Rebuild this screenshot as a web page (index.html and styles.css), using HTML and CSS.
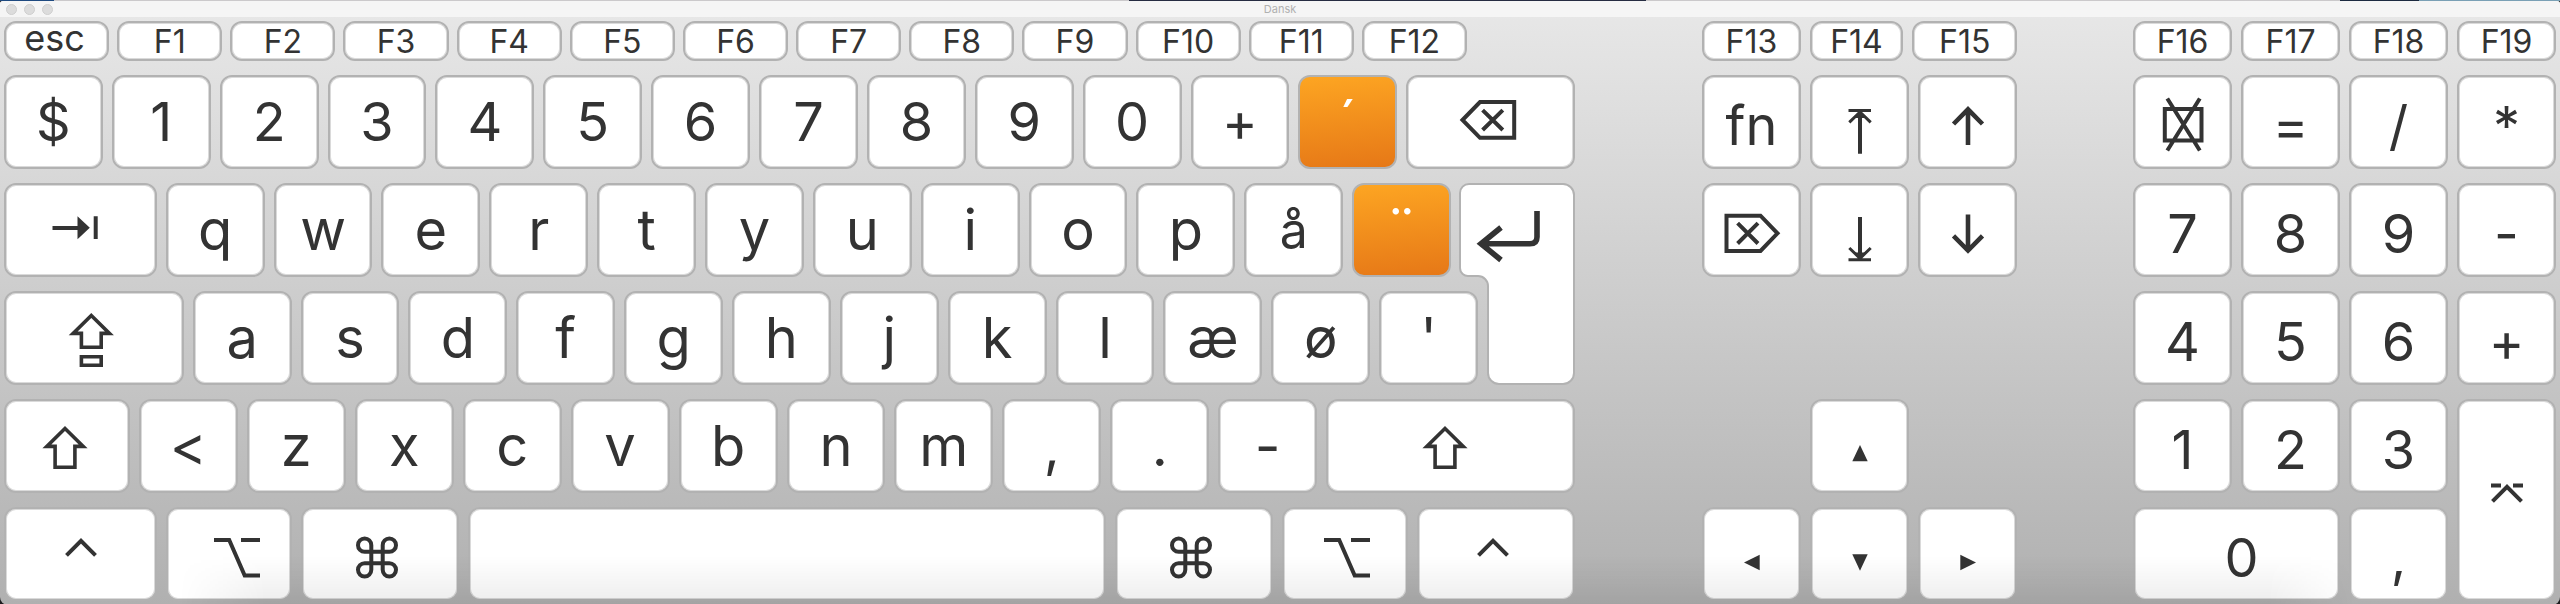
FILE: index.html
```html
<!DOCTYPE html>
<html lang="da">
<head>
<meta charset="utf-8">
<title>Dansk</title>
<link rel="stylesheet" href="styles.css">
</head>
<body>
<svg class="defs" aria-hidden="true">
  <symbol id="shift" viewBox="0 0 64 88"><path class="thin" d="M32 26.5 50.2 44.4H41.9V65.2H22.1V44.4H13.8Z"/></symbol>
  <symbol id="control" viewBox="0 0 64 88"><path d="M17.5 45.3 32 30.8 46.5 45.3"/></symbol>
  <symbol id="option" viewBox="0 0 64 88"><path d="M9 30H24.2L39.7 65.5H55M36 30H55"/></symbol>
  <symbol id="command" viewBox="0 0 64 88"><path transform="translate(32 47.5)" d="M-5.7-12.35V12.35a6.65 6.65 0 1 1-6.65-6.65H12.35a6.65 6.65 0 1 1-6.65 6.65V-12.35a6.65 6.65 0 1 1 6.65 6.65H-12.35a6.65 6.65 0 1 1 6.65-6.65Z"/></symbol>
</svg>
<div class="desktop"></div>
<div class="window">
  <header class="titlebar">
    <div class="lights">
      <button class="light" aria-label="Luk"></button>
      <button class="light" aria-label="Minimer"></button>
      <button class="light" aria-label="Zoom"></button>
    </div>
    <h1 class="title">Dansk</h1>
  </header>
  <main class="keyboard">
    <section class="block main-block" aria-label="Tastatur">
      <div class="row row-function">
        <button class="key fkey esc">esc</button><button class="key fkey">F1</button><button class="key fkey">F2</button><button class="key fkey">F3</button><button class="key fkey">F4</button><button class="key fkey">F5</button><button class="key fkey">F6</button><button class="key fkey">F7</button><button class="key fkey">F8</button><button class="key fkey">F9</button><button class="key fkey">F10</button><button class="key fkey">F11</button><button class="key fkey">F12</button>
      </div>
      <div class="row row-digits">
        <button class="key digit">$</button><button class="key digit">1</button><button class="key digit">2</button><button class="key digit">3</button><button class="key digit">4</button><button class="key digit">5</button><button class="key digit">6</button><button class="key digit">7</button><button class="key digit">8</button><button class="key digit">9</button><button class="key digit">0</button><button class="key digit">+</button><button class="key dead">´</button>
        <button class="key" aria-label="Slet"><svg class="icon" viewBox="0 0 64 88"><path d="M3.5 42 21 24H55.2V59.8H21ZM23.6 32.1 43.8 52M43.8 32.1 23.6 52"/></svg></button>
      </div>
      <div class="home">
        <div class="row row-upper">
          <button class="key" aria-label="Tabulator"><svg class="icon" viewBox="0 0 64 88"><path d="M4.5 42H32M47.7 30.3V53"/><path class="solid" d="M29.5 30.3 41.8 41.8 29.5 53.3Z"/></svg></button>
          <button class="key">q</button><button class="key">w</button><button class="key">e</button><button class="key">r</button><button class="key">t</button><button class="key">y</button><button class="key">u</button><button class="key">i</button><button class="key">o</button><button class="key">p</button><button class="key ring">å</button><button class="key dead">¨</button>
        </div>
        <div class="row row-middle">
          <button class="key" aria-label="Skiftelås"><svg class="icon" viewBox="0 0 64 88"><path class="thin" d="M29.3 21.5 47.5 39.4H39.2V53.2H19.4V39.4H11.1ZM19.4 62.7H39.2V71.2H19.4Z"/></svg></button>
          <button class="key">a</button><button class="key">s</button><button class="key">d</button><button class="key">f</button><button class="key">g</button><button class="key">h</button><button class="key">j</button><button class="key">k</button><button class="key">l</button><button class="key">æ</button><button class="key">ø</button><button class="key">'</button>
        </div>
        <button class="enter" aria-label="Retur">
          <svg class="enter-shape" viewBox="0 0 116 202" preserveAspectRatio="none"><path class="cap" d="M10 1H104A11 11 0 0 1 115 12V190A11 11 0 0 1 104 201H40A11 11 0 0 1 29 190V103A10 10 0 0 0 19 93H10A8 8 0 0 1 1 85V10A9 9 0 0 1 10 1Z"/><path class="thick" d="M78 28V54Q78 60.7 71 60.7H22M42 44.5 22 60.7 42 77"/></svg>
        </button>
      </div>
      <div class="row row-lower">
        <button class="key" aria-label="Venstre skift"><svg class="icon" viewBox="2 0 64 88"><use href="#shift" width="64" height="88"/></svg></button>
        <button class="key">&lt;</button><button class="key">z</button><button class="key">x</button><button class="key">c</button><button class="key">v</button><button class="key">b</button><button class="key">n</button><button class="key">m</button><button class="key">,</button><button class="key">.</button><button class="key">-</button>
        <button class="key" aria-label="Højre skift"><svg class="icon" viewBox="6 0 64 88"><use href="#shift" width="64" height="88"/></svg></button>
      </div>
      <div class="row row-space">
        <button class="key" aria-label="Venstre kontrol"><svg class="icon" viewBox="0 0 64 88"><use href="#control" width="64" height="88"/></svg></button>
        <button class="key" aria-label="Venstre alternativ"><svg class="icon" viewBox="-8 0 64 88"><use href="#option" width="64" height="88"/></svg></button>
        <button class="key" aria-label="Venstre kommando"><svg class="icon" viewBox="3 0 64 88"><use href="#command" width="64" height="88"/></svg></button>
        <button class="key" aria-label="Mellemrum"></button>
        <button class="key" aria-label="Højre kommando"><svg class="icon" viewBox="3 0 64 88"><use href="#command" width="64" height="88"/></svg></button>
        <button class="key" aria-label="Højre alternativ"><svg class="icon" viewBox="-2 0 64 88"><use href="#option" width="64" height="88"/></svg></button>
        <button class="key" aria-label="Højre kontrol"><svg class="icon" viewBox="3 0 64 88"><use href="#control" width="64" height="88"/></svg></button>
      </div>
    </section>

    <section class="block nav-block" aria-label="Navigation">
      <div class="row row-nav-function">
        <button class="key fkey">F13</button><button class="key fkey">F14</button><button class="key fkey">F15</button>
      </div>
      <div class="row row-nav">
        <button class="key digit">fn</button>
        <button class="key" aria-label="Hjem"><svg class="icon" viewBox="0 0 64 88"><path class="fine" d="M20.5 32.5H43M21.3 44.3 32 34 42.7 44.3"/><path d="M32 34V75.7"/><path class="solid" d="M32 33 38 40H26Z"/></svg></button>
        <button class="key" aria-label="Side op"><svg class="icon" viewBox="0 0 64 88"><path class="medium" d="M32 67V31M17.5 46 32 31.3 46.5 46"/></svg></button>
      </div>
      <div class="row row-nav">
        <button class="key" aria-label="Slet fremad"><svg class="icon" viewBox="0 0 64 88"><path d="M6.5 29.7H40.5L57.5 47.3 40.5 65H6.5ZM17.6 37.2 38 57.5M38 37.2 17.6 57.5"/></svg></button>
        <button class="key" aria-label="Slut"><svg class="icon" viewBox="0 0 64 88"><path class="fine" d="M20.5 73.7H43M21.3 62 32 72.3 42.7 62"/><path d="M32 31V72"/><path class="solid" d="M32 73.5 38 66.5H26Z"/></svg></button>
        <button class="key" aria-label="Side ned"><svg class="icon" viewBox="0 0 64 88"><path class="medium" d="M32 28.5V64.5M17.5 49.8 32 64.5 46.5 49.8"/></svg></button>
      </div>
      <div class="row row-nav row-up">
        <button class="key" aria-label="Pil op"><svg class="icon" viewBox="0 0 64 88"><path class="solid" d="M32 43 39.7 59.3H24.3Z"/></svg></button>
      </div>
      <div class="row row-nav row-arrows">
        <button class="key" aria-label="Pil venstre"><svg class="icon" viewBox="0 0 64 88"><path class="solid" d="M24 52.5 39.7 44.7V60.2Z"/></svg></button>
        <button class="key" aria-label="Pil ned"><svg class="icon" viewBox="0 0 64 88"><path class="solid" d="M32 60.7 39.7 44.3H24.3Z"/></svg></button>
        <button class="key" aria-label="Pil højre"><svg class="icon" viewBox="0 0 64 88"><path class="solid" d="M40 52.5 24.3 44.7V60.2Z"/></svg></button>
      </div>
    </section>

    <section class="block pad-block" aria-label="Numerisk tastatur">
      <button class="key fkey">F16</button><button class="key fkey">F17</button><button class="key fkey">F18</button><button class="key fkey">F19</button>
      <button class="key" aria-label="Ryd"><svg class="icon" viewBox="0 0 64 88"><path d="M13.8 31H50.5V62.5H13.8ZM16.3 20.5 48.8 72.5M48.8 20.5 16.3 72.5"/></svg></button>
      <button class="key digit">=</button><button class="key digit">/</button><button class="key digit">*</button>
      <button class="key digit">7</button><button class="key digit">8</button><button class="key digit">9</button><button class="key digit">-</button>
      <button class="key digit">4</button><button class="key digit">5</button><button class="key digit">6</button><button class="key digit">+</button>
      <button class="key digit">1</button><button class="key digit">2</button><button class="key digit">3</button>
      <button class="key tall" aria-label="Enter"><svg class="icon" viewBox="0 0 64 88"><path d="M17.5 45.3 32 30.8 46.5 45.3M16 29.5H26M38 29.5H48"/></svg></button>
      <button class="key digit wide">0</button><button class="key digit">,</button>
    </section>
  </main>
</div>
</body>
</html>
```
FILE: styles.css
```css
* {
  box-sizing: border-box;
}

body {
  margin: 0;
  min-height: 100vh;
  display: flex;
  flex-direction: column;
  background: #1c1c1e;
  color: #333;
  font-family: Inter, "Liberation Sans", sans-serif;
}

button {
  margin: 0;
  padding: 0;
  border: 0;
  background: none;
  color: inherit;
  font: inherit;
}

.defs {
  position: absolute;
  width: 0;
  height: 0;
}

/* Sliver of desktop above the window */
.desktop {
  height: 1px;
  background: linear-gradient(90deg, #1f4a80 2.1%, #cbc9cb 2.1% 44.1%, #262c42 44.1% 64.3%, #cbc9cb 64.3% 91.4%, #1c2a40 91.4% 94.5%, #7aa0b5 94.5%);
}

.window {
  position: relative;
  flex: 1;
  display: flex;
  flex-direction: column;
  border-radius: 3px 3px 8px 8px;
  overflow: hidden;
  background: linear-gradient(#e8e8e8, #cccccc 50%, #b0b0b0);
}

/* Soft shade along the bottom edge */
.window::after {
  content: "";
  position: absolute;
  left: 7%;
  right: 8%;
  bottom: 0;
  height: 48px;
  border-bottom: 1px solid rgba(0, 0, 0, 0.12);
  background: linear-gradient(transparent, rgba(0, 0, 0, 0.07));
  -webkit-mask-image: linear-gradient(90deg, transparent, #000 4%, #000 96%, transparent);
  mask-image: linear-gradient(90deg, transparent, #000 4%, #000 96%, transparent);
  pointer-events: none;
}

.titlebar {
  height: 16px;
  display: grid;
  grid-template-columns: 1fr auto 1fr;
  align-items: center;
  padding: 0 6px;
  background: #f5f5f5;
}

.lights {
  display: flex;
  gap: 7px;
}

.light {
  width: 11px;
  height: 11px;
  border: 1px solid #cecece;
  border-radius: 50%;
  background: #dcdcdc;
}

.title {
  margin: 0;
  color: #b0b0b0;
  font-size: 11px;
  line-height: 16px;
  font-weight: 400;
}

.keyboard {
  flex: 1;
  display: grid;
  grid-template-columns: 1571fr 127fr 315fr 116fr 423fr;
  padding: 4px;
}

.block {
  display: grid;
  grid-template-rows: 40px repeat(5, minmax(93px, 1fr));
  row-gap: 14px;
  min-width: 0;
}

.nav-block {
  grid-column: 3;
}

.pad-block {
  grid-column: 5;
}

.row {
  display: grid;
  column-gap: 9px;
  min-width: 0;
}

.row-function {
  grid-template-columns: repeat(13, 1fr);
  column-gap: 8px;
  margin-right: 108px;
}

.row-digits {
  grid-template-columns: repeat(13, 99fr) 169fr;
}

/* Two letter rows share the L-shaped return key */
.home {
  grid-row: span 2;
  display: grid;
  grid-template-columns: 1455fr 28fr 88fr;
  grid-template-rows: 1fr 1fr;
  row-gap: 14px;
}

.row-upper {
  grid-area: 1 / 1;
  grid-template-columns: 153fr repeat(12, 99fr);
  padding-right: 8px;
}

.row-middle {
  grid-area: 2 / 1 / 3 / 3;
  grid-template-columns: 180fr repeat(12, 99fr);
  padding-right: 9px;
}

.enter {
  grid-area: 1 / 2 / 3 / 4;
  display: block;
  min-width: 0;
  min-height: 0;
}

.enter-shape {
  display: block;
  width: 100%;
  height: 100%;
}

.row-lower {
  grid-template-columns: 126fr repeat(11, 99fr) 249fr;
}

.row-space {
  grid-template-columns: 153fr 126fr 158fr 638fr 158fr 126fr 158fr;
}

.row-nav {
  grid-template-columns: repeat(3, 1fr);
}

.row-nav-function {
  grid-template-columns: 99fr 94fr 105fr;
}

.row-up {
  grid-row: 5;
}

.row-arrows {
  grid-row: 6;
}

.row-up .key {
  grid-column: 2;
}

.pad-block {
  grid-template-columns: repeat(4, 1fr);
  column-gap: 9px;
}

.tall {
  grid-row: span 2;
}

.wide {
  grid-column: span 2;
}

.key {
  display: flex;
  align-items: center;
  justify-content: center;
  min-width: 0;
  min-height: 0;
  border: 2px solid #b2b2b2;
  border-radius: 12px;
  background: #fff;
  box-shadow: inset 0 0 0 1px #dadada;
  font-size: 56px;
  font-weight: 400;
  line-height: 64px;
}

.digit {
  font-size: 54px;
}

.nav-block .digit,
.pad-block .digit {
  padding-top: 8px;
}

.pad-block .wide {
  padding-left: 10px;
}

.fkey {
  padding-top: 2px;
  font-size: 32px;
  line-height: 32px;
}

.esc {
  padding: 0 4px 6px 0;
  font-size: 36px;
}

.ring {
  font-size: 50px;
}

.dead {
  background: linear-gradient(175deg, #fda522, #e67817);
  box-shadow: none;
  color: #fff;
}

.icon {
  flex: none;
  width: 64px;
  height: 88px;
}

path {
  fill: none;
  stroke: #333;
  stroke-width: 4;
}

.fine {
  stroke-width: 3;
}

.thin {
  stroke-width: 3.6;
}

.medium {
  stroke-width: 4.6;
}

.thick {
  stroke-width: 5.6;
}

.solid {
  fill: #333;
  stroke: none;
}

.cap {
  fill: #fff;
  stroke: #b2b2b2;
  stroke-width: 2;
}
```
